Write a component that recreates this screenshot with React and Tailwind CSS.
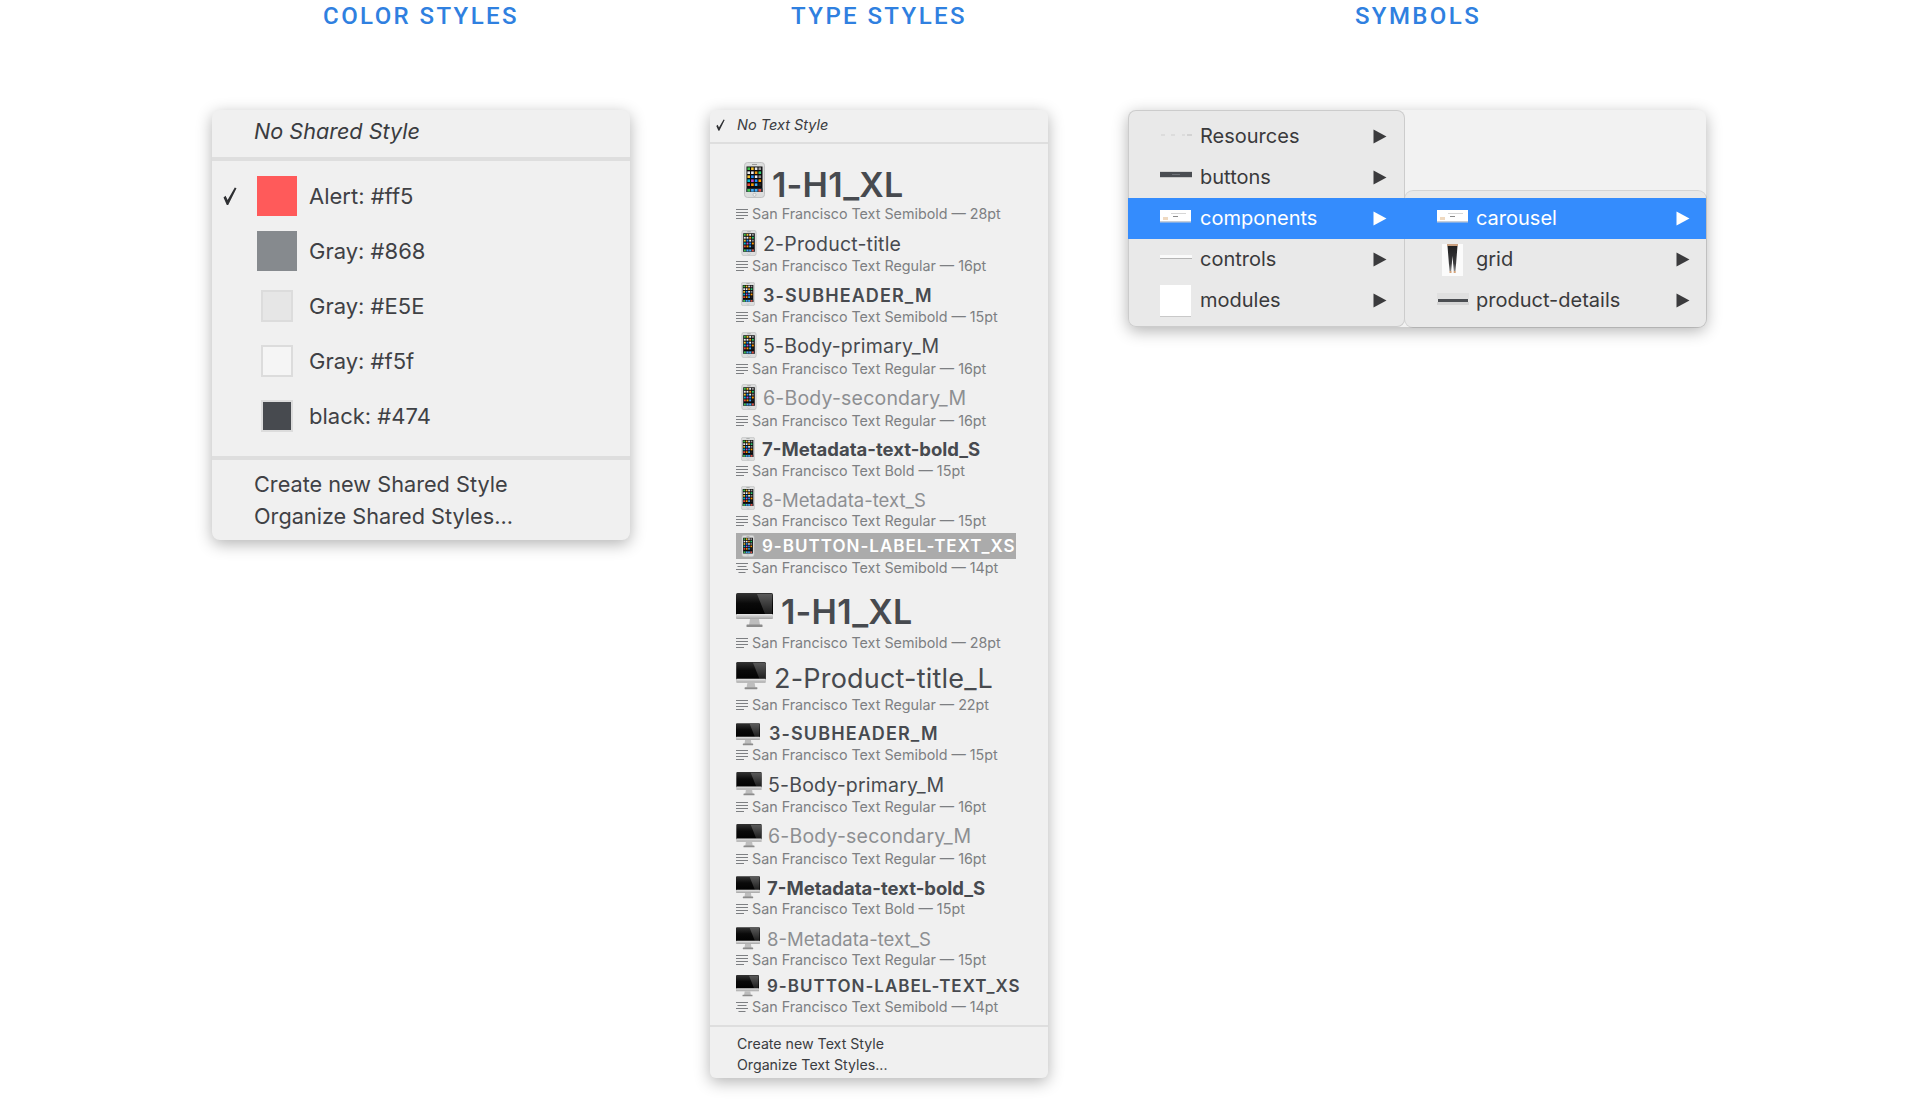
const SANS = "font-['Inter','Noto_Sans',sans-serif]";

function Phone({ w, h }) {
  const cols = ["#3fc14b", "#f4c430", "#e8e8e8", "#9a9a9a", "#e8e8e8", "#f1f1f1", "#f39c12", "#2ecc71", "#f4c430", "#1e90ff", "#f1f1f1", "#8a8a8a", "#00bcd4", "#c04fd0", "#1e90ff", "#ff9800", "#e84c3d", "#ff9800", "#3fa9f5", "#222"];
  return (
    <svg width={w} height={h} viewBox="0 0 21 36" className="shrink-0">
      <rect x="0.5" y="0.5" width="20" height="35" rx="3" fill="#dcdddd" stroke="#b8b9ba" strokeWidth="0.8" />
      <rect x="8" y="2" width="5" height="1" fill="#9a9a9a" />
      <rect x="2.5" y="4.5" width="16" height="25.5" fill="#0b0b0d" />
      {cols.map((c, i) => (
        <rect key={i} x={3.4 + (i % 4) * 3.7} y={5.4 + Math.floor(i / 4) * 4} width="2.6" height="2.6" fill={c} />
      ))}
      <rect x="2.5" y="26.4" width="16" height="3.6" fill="#2a3a44" />
      <rect x="3.4" y="27" width="2.6" height="2.6" fill="#3fc14b" />
      <rect x="7.1" y="27" width="2.6" height="2.6" fill="#3fa9f5" />
      <rect x="10.8" y="27" width="2.6" height="2.6" fill="#3fa9f5" />
      <rect x="14.5" y="27" width="2.6" height="2.6" fill="#e84c3d" />
      <circle cx="10.5" cy="32.8" r="1.5" fill="#f0f0f0" stroke="#9f9f9f" strokeWidth="0.5" />
    </svg>
  );
}

function Desktop({ w, h }) {
  return (
    <svg width={w} height={h} viewBox="0 0 37 35" className="shrink-0">
      <defs>
        <linearGradient id="chin" x1="0" y1="0" x2="0" y2="1">
          <stop offset="0" stopColor="#e8e8e8" />
          <stop offset="1" stopColor="#a4a4a4" />
        </linearGradient>
        <linearGradient id="sheen" x1="0" y1="0" x2="0" y2="1">
          <stop offset="0" stopColor="#5a5a5a" />
          <stop offset="1" stopColor="#1d1d1d" />
        </linearGradient>
        <linearGradient id="screen" x1="0" y1="0" x2="0" y2="1">
          <stop offset="0" stopColor="#333" />
          <stop offset="0.45" stopColor="#0a0a0a" />
          <stop offset="1" stopColor="#000" />
        </linearGradient>
      </defs>
      <rect x="0" y="0" width="37" height="23" rx="1.5" fill="url(#screen)" />
      <path d="M21 1H36V21H29Z" fill="url(#sheen)" />
      <rect x="0" y="21" width="37" height="5" rx="1" fill="url(#chin)" />
      <path d="M14 26h9l1 6H13z" fill="#bdbdbd" />
      <rect x="10.5" y="31.5" width="16" height="2.5" rx="0.6" fill="#8c8c8c" />
    </svg>
  );
}

function AlignLines({ center }) {
  return (
    <svg width="12" height="12" viewBox="0 0 12 12" className="shrink-0 mr-[4px]">
      <g stroke="#7d7f82" strokeWidth="1">
        <path d="M0 1.5H12" />
        <path d={center ? "M1.5 4.5H10.5" : "M0 4.5H12"} />
        <path d="M0 7.5H12" />
        <path d={center ? "M2.5 10.5H9.5" : "M0 10.5H8"} />
      </g>
    </svg>
  );
}

const big = "font-semibold text-[#474a4f] text-[34px] tracking-[0.2px]";
const reg = "text-[#474a4f] text-[19.5px] tracking-[0.2px]";
const regDim = "text-[#8d8f92] text-[19.5px] tracking-[0.2px]";
const sub = "font-semibold text-[#474a4f] text-[18px] tracking-[1.1px]";
const bold = "font-bold text-[#474a4f] text-[18.5px]";
const dim = "text-[#8d8f92] text-[18.5px]";
const btn = "text-[17px] font-semibold tracking-[1px]";

const rows = [
  { title: "1-H1_XL", icon: <Phone w={21} h={36} />, ib: "mb-[10px]", cls: `h-[41px] pl-[8px] gap-[7px] ${big}`, sub: "San Francisco Text Semibold — 28pt", mt: "mt-[20.5px]" },
  { title: "2-Product-title", icon: <Phone w={16} h={26} />, ib: "mb-[4px]", cls: `h-[25px] pl-[5px] gap-[6px] ${reg}`, sub: "San Francisco Text Regular — 16pt", mt: "mt-[10px]" },
  { title: "3-SUBHEADER_M", icon: <Phone w={14} h={24} />, ib: "mb-[4px]", cls: `h-[25px] pl-[5px] gap-[8px] ${sub}`, sub: "San Francisco Text Semibold — 15pt", mt: "mt-[9px]" },
  { title: "5-Body-primary_M", icon: <Phone w={16} h={26} />, ib: "mb-[4px]", cls: `h-[27px] pl-[5px] gap-[6px] ${reg}`, sub: "San Francisco Text Regular — 16pt", mt: "mt-[8px]" },
  { title: "6-Body-secondary_M", icon: <Phone w={16} h={26} />, ib: "mb-[4px]", cls: `h-[27px] pl-[5px] gap-[6px] ${regDim}`, sub: "San Francisco Text Regular — 16pt", mt: "mt-[8px]" },
  { title: "7-Metadata-text-bold_S", icon: <Phone w={14} h={24} />, ib: "mb-[2px]", cls: `h-[25px] pl-[5px] gap-[7px] ${bold}`, sub: "San Francisco Text Bold — 15pt", mt: "mt-[7.5px]" },
  { title: "8-Metadata-text_S", icon: <Phone w={14} h={24} />, ib: "mb-[4px]", cls: `h-[25px] pl-[5px] gap-[7px] ${dim}`, sub: "San Francisco Text Regular — 15pt", mt: "mt-[8.5px]" },
  { title: "9-BUTTON-LABEL-TEXT_XS", icon: <Phone w={14} h={22} />, ib: "mb-[0px]", cls: `h-[26px] pl-[5px] gap-[7px] ${btn} text-white bg-[#ababab] w-[280px]`, sub: "San Francisco Text Semibold — 14pt", mt: "mt-[3.5px]", center: true },
  { title: "1-H1_XL", icon: <Desktop w={37} h={35} />, ib: "mb-[4px]", cls: `h-[45px] gap-[8px] ${big}`, sub: "San Francisco Text Semibold — 28pt", mt: "mt-[13.5px]" },
  { title: "2-Product-title_L", icon: <Desktop w={30} h={28} />, ib: "mb-[4px]", cls: "h-[37px] gap-[8px] text-[27px] text-[#474a4f] tracking-[0.2px]", sub: "San Francisco Text Regular — 22pt", mt: "mt-[8px]" },
  { title: "3-SUBHEADER_M", icon: <Desktop w={24} h={23} />, ib: "mb-[0px]", cls: `h-[25px] gap-[9px] ${sub}`, sub: "San Francisco Text Semibold — 15pt", mt: "mt-[8px]" },
  { title: "5-Body-primary_M", icon: <Desktop w={26} h={24} />, ib: "mb-[4px]", cls: `h-[25px] gap-[6px] ${reg}`, sub: "San Francisco Text Regular — 16pt", mt: "mt-[10px]" },
  { title: "6-Body-secondary_M", icon: <Desktop w={26} h={24} />, ib: "mb-[2px]", cls: `h-[27px] gap-[6px] ${regDim}`, sub: "San Francisco Text Regular — 16pt", mt: "mt-[8px]" },
  { title: "7-Metadata-text-bold_S", icon: <Desktop w={24} h={23} />, ib: "mb-[2px]", cls: `h-[25px] gap-[7px] ${bold}`, sub: "San Francisco Text Bold — 15pt", mt: "mt-[8px]" },
  { title: "8-Metadata-text_S", icon: <Desktop w={24} h={23} />, ib: "mb-[2px]", cls: `h-[25px] gap-[7px] ${dim}`, sub: "San Francisco Text Regular — 15pt", mt: "mt-[9px]" },
  { title: "9-BUTTON-LABEL-TEXT_XS", icon: <Desktop w={23} h={22} />, ib: "mb-[1px]", cls: `h-[25px] gap-[8px] ${btn} text-[#474a4f]`, sub: "San Francisco Text Semibold — 14pt", mt: "mt-[5px]", center: true },
];

function TypeRow({ r }) {
  return (
    <div className={r.mt}>
      <div className={`flex items-center leading-none whitespace-nowrap ${r.cls}`}>
        <div className={`shrink-0 flex ${r.ib}`}>{r.icon}</div>
        <span>{r.title}</span>
      </div>
      <div className="flex items-center h-[17px] text-[14.3px] text-[#7d7f82] whitespace-nowrap">
        <AlignLines center={r.center} />
        <span>{r.sub}</span>
      </div>
    </div>
  );
}

function Check({ w, h }) {
  return (
    <svg width={w} height={h} viewBox="0 0 14 18" className="shrink-0">
      <path d="M0.5 10.5L2.6 8.8L4.6 13L11.8 0.5L13.5 1.2L5.2 18H3.8Z" fill="#2f3033" />
    </svg>
  );
}

function ColorRow({ check, swatch, label }) {
  return (
    <div className="flex items-center h-[55px]">
      <div className="w-[45px] pl-[11px] flex items-center">{check ? <Check w={14} h={18} /> : null}</div>
      <div className="w-[40px] h-[40px] flex items-center justify-center shrink-0">
        <div className={`shrink-0 ${swatch}`} />
      </div>
      <div className="ml-[12px] text-[22px] text-[#3f4145] leading-none">{label}</div>
    </div>
  );
}

function Arrow({ white }) {
  return (
    <svg width="14" height="15" viewBox="0 0 14 15" className="shrink-0">
      <path d="M0.5 0.5L13.5 7.5L0.5 14.5Z" fill={white ? "#ffffff" : "#3b3b3d"} />
    </svg>
  );
}

function Thumb({ kind }) {
  if (kind === "resources")
    return (
      <svg width="32" height="32" viewBox="0 0 32 32">
        <path d="M1 14h4M11 14h4M22 14h3" stroke="#cfcfcf" strokeWidth="1" />
        <path d="M27 14h5" stroke="#bdbdbd" strokeWidth="1.2" />
      </svg>
    );
  if (kind === "buttons")
    return (
      <svg width="32" height="32" viewBox="0 0 32 32">
        <rect y="9" width="32" height="1" fill="#d2d2d2" />
        <rect y="10" width="32" height="5" fill="#4a4d52" />
        <rect x="12" y="12" width="8" height="1" fill="#6d7076" />
        <rect y="15" width="32" height="1" fill="#c8c8c8" />
      </svg>
    );
  if (kind === "components")
    return (
      <svg width="32" height="32" viewBox="0 0 32 32">
        <rect y="7" width="31" height="11" fill="#ffffff" />
        <rect y="18" width="31" height="1.5" fill="#c7cdd6" />
        <rect x="3" y="14" width="5" height="3" fill="#efd9c0" />
        <rect x="11" y="10" width="15" height="1" fill="#d6d6d6" />
        <rect x="13" y="13" width="5" height="1" fill="#8a8a8a" />
      </svg>
    );
  if (kind === "controls")
    return (
      <svg width="32" height="32" viewBox="0 0 32 32">
        <rect y="11" width="32" height="3" fill="#fafafa" />
        <rect y="14" width="32" height="1" fill="#b5b5b5" />
      </svg>
    );
  if (kind === "modules")
    return (
      <svg width="32" height="32" viewBox="0 0 32 32">
        <rect width="31" height="31" fill="#ffffff" />
        <rect y="31" width="31" height="1" fill="#c9c9c9" />
      </svg>
    );
  if (kind === "grid")
    return (
      <svg width="32" height="32" viewBox="0 0 32 32">
        <defs>
          <linearGradient id="pants" x1="0" y1="0" x2="0" y2="1">
            <stop offset="0" stopColor="#1f1f21" />
            <stop offset="0.7" stopColor="#3a3a3c" />
            <stop offset="1" stopColor="#8c8c8c" />
          </linearGradient>
        </defs>
        <rect x="5" width="21" height="32" fill="#fbfbfb" />
        <rect x="10" y="0" width="11" height="2" fill="#c9a080" />
        <path d="M10.5 2H20.5L18.5 27H16.8L15.5 12L14.2 27H12.5Z" fill="url(#pants)" />
        <rect x="12.5" y="27" width="2" height="2" fill="#d4a37a" />
        <rect x="16.7" y="27" width="2" height="2" fill="#d4a37a" />
      </svg>
    );
  return (
    <svg width="32" height="32" viewBox="0 0 32 32">
      <rect x="0" y="8" width="32" height="6" fill="#e0e0e0" />
      <rect x="1" y="14" width="30" height="3" fill="#4b4e52" />
      <rect x="0" y="17" width="32" height="3" fill="#d5d5d5" />
    </svg>
  );
}

function SymRow({ kind, label, active, gap, mr }) {
  return (
    <div className={`flex items-center h-[41px] pl-[32px] ${active ? "bg-[#348cfd] text-white" : "text-[#3a3a3c]"}`}>
      <div className="w-[32px] h-[32px] shrink-0">
        <Thumb kind={kind} />
      </div>
      <div className={`flex-1 text-[20px] leading-none pb-[2px] ${gap}`}>{label}</div>
      <div className={mr}>
        <Arrow white={active} />
      </div>
    </div>
  );
}

const Heading = ({ children, cls }) => (
  <div className={`font-['Roboto',sans-serif] font-medium text-[24px] leading-[32px] tracking-[2.4px] text-[#2f80e0] text-center ${cls}`}>{children}</div>
);

export default function App() {
  return (
    <div className={`w-[1920px] h-[1100px] bg-white flex overflow-hidden ${SANS}`}>
      <div className="w-[212px] shrink-0" />
      <div className="w-[418px] shrink-0">
        <Heading cls="h-[110px]">COLOR STYLES</Heading>
        <div className="w-[418px] h-[430px] rounded-[8px] bg-[#f0f0f0] shadow-[0_4px_16px_rgba(0,0,0,0.3)] overflow-hidden">
          <div className="h-[47px] pb-[4px] pl-[42px] flex items-center italic text-[21.6px] text-[#3a3c40] leading-none">No Shared Style</div>
          <div className="h-[4px] bg-[#dedede]" />
          <div className="pt-[7px]">
            <ColorRow check swatch="w-[40px] h-[40px] bg-[#ff5a5a]" label="Alert: #ff5" />
            <ColorRow swatch="w-[40px] h-[40px] bg-[#868a8e]" label="Gray: #868" />
            <ColorRow swatch="w-[32px] h-[32px] bg-[#e6e6e6] border-2 border-[#dcdcdc]" label="Gray: #E5E" />
            <ColorRow swatch="w-[32px] h-[32px] bg-[#f5f5f5] border-2 border-[#dcdcdc]" label="Gray: #f5f" />
            <ColorRow swatch="w-[32px] h-[32px] bg-[#474a4f] border-2 border-[#dcdcdc]" label="black: #474" />
          </div>
          <div className="mt-[13px] h-[4px] bg-[#dedede]" />
          <div className="pl-[42px] pt-[9px] text-[21.7px] text-[#3f4145] leading-[31.5px] whitespace-nowrap">
            <div>Create new Shared Style</div>
            <div>Organize Shared Styles...</div>
          </div>
        </div>
      </div>

      <div className="w-[80px] shrink-0" />

      <div className="w-[338px] shrink-0">
        <Heading cls="h-[110px]">TYPE STYLES</Heading>
        <div className="w-[338px] h-[968px] rounded-[6px] bg-[#f0f0f0] shadow-[0_4px_16px_rgba(0,0,0,0.3)] overflow-hidden">
          <div className="h-[32px] pb-[2px] flex items-center italic text-[14.5px] text-[#3a3c40] leading-none whitespace-nowrap">
            <span className="w-[27px] pl-[6px] flex"><Check w={9} h={12} /></span>
            <span>No Text Style</span>
          </div>
          <div className="h-[2px] bg-[#dedede]" />
          <div className="pl-[26px]">
            {rows.map((r, i) => (
              <TypeRow key={i} r={r} />
            ))}
          </div>
          <div className="mt-[9px] h-[2px] bg-[#dedede]" />
          <div className="pl-[27px] pt-[6px] text-[14.2px] text-[#3a3c40] leading-[21px] whitespace-nowrap">
            <div>Create new Text Style</div>
            <div>Organize Text Styles...</div>
          </div>
        </div>
      </div>

      <div className="w-[80px] shrink-0" />

      <div className="w-[578px] shrink-0">
        <Heading cls="h-[110px] pl-[2px]">SYMBOLS</Heading>
        <div className="flex w-[578px] h-[217px] rounded-[8px] bg-[#f2f2f2] shadow-[0_4px_16px_rgba(0,0,0,0.3)]">
          <div className="w-[277px] h-[217px] rounded-[8px] bg-[#e9e9e9] shadow-[inset_0_0_0_1px_rgba(0,0,0,0.12)] overflow-hidden pt-[6px] z-10">
            <SymRow kind="resources" label="Resources" gap="ml-[8px]" mr="mr-[18px]" />
            <SymRow kind="buttons" label="buttons" gap="ml-[8px]" mr="mr-[18px]" />
            <SymRow kind="components" label="components" active gap="ml-[8px]" mr="mr-[18px]" />
            <SymRow kind="controls" label="controls" gap="ml-[8px]" mr="mr-[18px]" />
            <SymRow kind="modules" label="modules" gap="ml-[8px]" mr="mr-[18px]" />
          </div>
          <div className="w-[301px] h-[217px] pt-[81px]">
            <div className="h-[136px] rounded-[8px] bg-[#e9e9e9] shadow-[0_0_0_1px_rgba(0,0,0,0.12)] overflow-hidden pt-[7px]">
              <SymRow kind="components" label="carousel" active gap="ml-[7px]" mr="mr-[16px]" />
              <SymRow kind="grid" label="grid" gap="ml-[7px]" mr="mr-[16px]" />
              <SymRow kind="details" label="product-details" gap="ml-[7px]" mr="mr-[16px]" />
            </div>
          </div>
        </div>
      </div>
    </div>
  );
}
